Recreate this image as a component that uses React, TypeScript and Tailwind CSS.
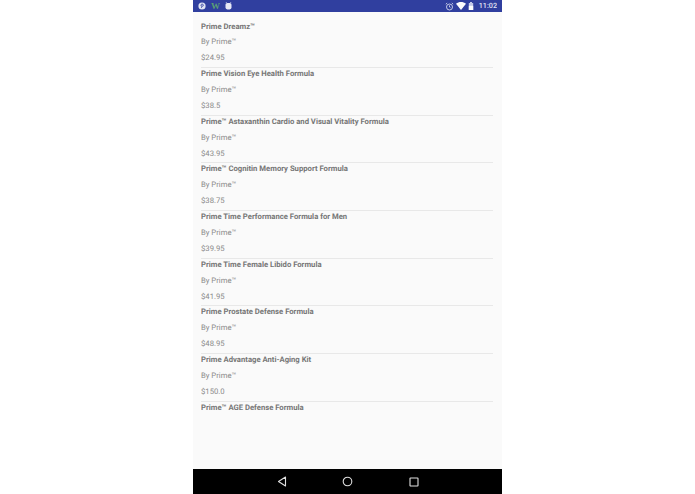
const products = [
  { name: 'Prime Dreamz™', price: '$24.95' },
  { name: 'Prime Vision Eye Health Formula', price: '$38.5' },
  { name: 'Prime™ Astaxanthin Cardio and Visual Vitality Formula', price: '$43.95' },
  { name: 'Prime™ Cognitin Memory Support Formula', price: '$38.75' },
  { name: 'Prime Time Performance Formula for Men', price: '$39.95' },
  { name: 'Prime Time Female Libido Formula', price: '$41.95' },
  { name: 'Prime Prostate Defense Formula', price: '$48.95' },
  { name: 'Prime Advantage Anti-Aging Kit', price: '$150.0' },
];

function Row({ name, price }: { name: string; price: string }) {
  return (
    <div className="flex h-[47.67px] flex-col">
      <p className="h-[16px] text-[7.7px] leading-[12px] font-bold text-[#757575] [text-rendering:geometricPrecision]">{name}</p>
      <p className="h-[16px] text-[7.7px] leading-[12px] text-[#8a8a8a] [text-rendering:geometricPrecision]">By Prime™</p>
      <p className="h-[15px] text-[7.7px] leading-[12px] text-[#8a8a8a] [text-rendering:geometricPrecision]">{price}</p>
      <div className="mt-auto h-px bg-[#e8e8e8]" />
    </div>
  );
}

export default function App() {
  return (
    <div className="flex h-[494px] w-[695px] justify-center bg-white font-['Roboto',sans-serif]">
      <div className="flex w-[309px] flex-col bg-[#fafafa]">
        <div className="flex h-[12px] items-center justify-between bg-[#303f9f] pr-[5px] pl-[5px]">
          <div className="flex items-center gap-[5px]">
            <svg width="8" height="8" viewBox="0 0 8 8">
              <circle cx="4" cy="4" r="3.6" fill="#dfe3f3" />
              <path d="M4.2 2.2 3.4 6M3 3.9c-.5-1 .2-1.8 1.2-1.8s1.500.8 1.200 1.600c-.3.7-1 .8-1.500.5" fill="none" stroke="#303f9f" strokeWidth=".7" />
            </svg>
            <span className="font-['Liberation_Serif',serif] text-[9px] leading-none font-bold text-[#5a9f74]">W</span>
            <svg width="7" height="8" viewBox="0 0 7 8">
              <path d="M1.600 1 1 0M5.400 1 6 0" stroke="#e6e8f5" strokeWidth=".6" />
              <rect x=".5" y="1" width="6" height="6.400" rx="1.800" fill="#e6e8f5" />
            </svg>
          </div>
          <div className="flex items-center opacity-[0.99]">
            <svg className="mr-[2px]" width="9" height="9" viewBox="0 0 9 9" fill="none" stroke="#d5d9ee" strokeWidth=".9">
              <circle cx="4.500" cy="5" r="3" />
              <path d="M4.500 3.400V5l1 .7M.8 2.200 2.200 1M8.200 2.200 6.800 1" />
            </svg>
            <svg className="mr-[2px]" width="10" height="8" viewBox="0 0 10 8">
              <path d="M0 1.800C2.800-.5 7.200-.5 10 1.800L5 8Z" fill="#fff" />
            </svg>
            <svg className="mr-[5px]" width="6" height="8" viewBox="0 0 6 8">
              <path d="M2 0h2v1h1.200v7H.8V1H2Z" fill="#c5cae9" />
              <path d="M.8 3.800h4.400V8H.8Z" fill="#fff" />
            </svg>
            <span className="text-[7.2px] leading-none font-medium text-[#e4e6f4] [text-rendering:geometricPrecision]">11:02</span>
          </div>
        </div>
        <div className="flex-1 overflow-hidden pt-[8.500px] pr-[9px] pl-[8px] opacity-[0.99]">
          {products.map((p) => (
            <Row key={p.name} name={p.name} price={p.price} />
          ))}
          <p className="text-[7.7px] leading-[12px] font-bold text-[#757575] [text-rendering:geometricPrecision]">Prime™ AGE Defense Formula</p>
        </div>
        <div className="flex h-[25px] items-center justify-center gap-[55.500px] bg-black">
          <svg width="10" height="11" viewBox="0 0 10 11" fill="none" stroke="#e0e0e0" strokeWidth="1.100">
            <path d="M8.500 1 1.500 5.500l7 4.500Z" strokeLinejoin="round" />
          </svg>
          <svg width="11" height="11" viewBox="0 0 11 11" fill="none" stroke="#e0e0e0" strokeWidth="1.100">
            <circle cx="5.500" cy="5.500" r="4.300" />
          </svg>
          <svg width="10" height="10" viewBox="0 0 10 10" fill="none" stroke="#e0e0e0" strokeWidth="1.100">
            <rect x="1" y="1" width="8" height="8" rx=".6" />
          </svg>
        </div>
      </div>
    </div>
  );
}
